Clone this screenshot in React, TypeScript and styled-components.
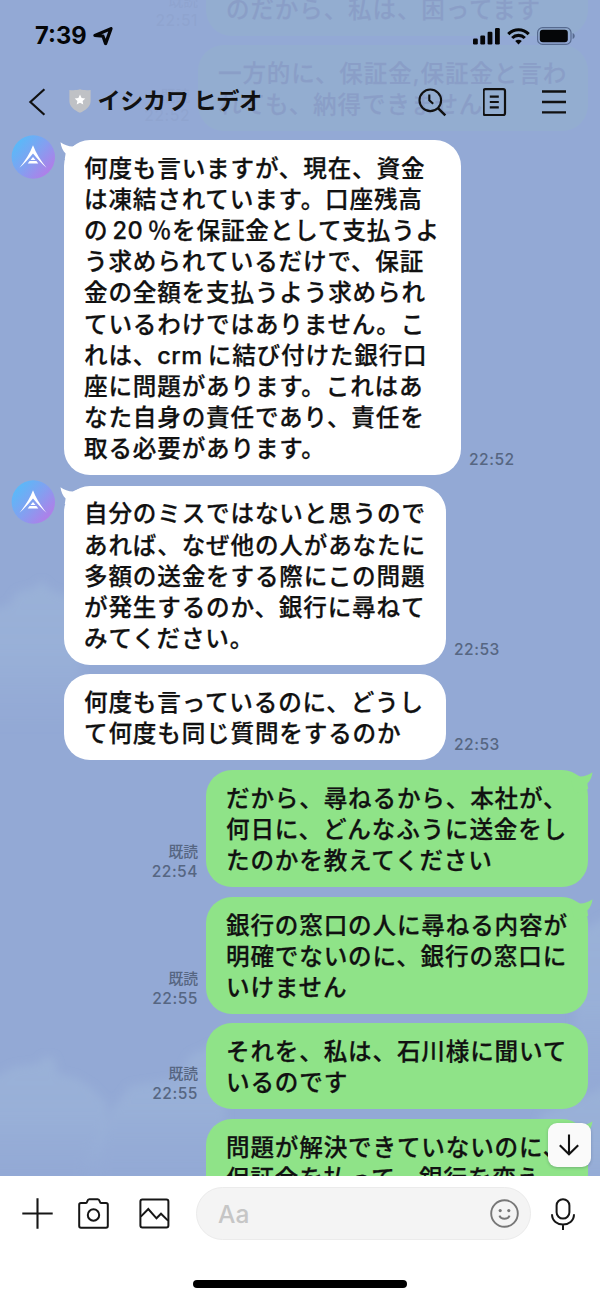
import React from 'react';
import styled, { createGlobalStyle, css } from 'styled-components';

const GlobalStyle = createGlobalStyle`
  *, *::before, *::after { box-sizing: border-box; }
  body {
    margin: 0;
    background: #fff;
    font-family: Inter, "Noto Sans CJK JP", sans-serif;
    color: #111;
  }
  svg { display: block; flex: none; }
`;

const Screen = styled.div`
  width: 600px;
  height: 1299px;
  display: flex;
  flex-direction: column;
  overflow: hidden;
  background: #fff;
`;

const Chat = styled.main`
  position: relative;
  height: 1175.5px;
  overflow: hidden;
  background: #93a9d5;
`;

const Sky = styled.svg`
  position: absolute;
  inset: 0;
`;

const Header = styled.header`
  position: absolute;
  top: 0;
  left: 0;
  z-index: 2;
  width: 600px;
  height: 134px;
  background: rgba(147, 169, 213, 0.93);
`;

const StatusBar = styled.div`
  display: flex;
  align-items: center;
  height: 72px;
  padding: 0 25px 0 35px;
`;

const Clock = styled.span`
  width: 58px;
  font-size: 23.7px;
  font-weight: 700;
  line-height: 30px;
  color: #050608;
`;

const StatusIcons = styled.div`
  display: flex;
  align-items: center;
  gap: 7px;
  margin-left: auto;
`;

const NavBar = styled.nav`
  display: flex;
  align-items: center;
  height: 60px;
  padding: 0 34px 0 28px;
`;

const ContactName = styled.h1`
  margin: -2px 0 0 7px;
  font-size: 23.2px;
  font-weight: 700;
  line-height: 32px;
  letter-spacing: -0.45px;
  white-space: nowrap;
`;

const NavActions = styled.div`
  display: flex;
  align-items: center;
  gap: 35.5px;
  margin-left: auto;
`;

const Thread = styled.div`
  position: relative;
  display: flex;
  flex-direction: column;
  margin-top: -50.4px;
`;

const Row = styled.article<{ $mine?: boolean; $gap: number }>`
  display: flex;
  flex-direction: ${(p) => (p.$mine ? 'row-reverse' : 'row')};
  align-items: flex-end;
  gap: 8px;
  margin-top: ${(p) => p.$gap}px;
  padding: ${(p) => (p.$mine ? '0 12px 0 0' : '0 0 0 11px')};
`;

const AvatarSlot = styled.div`
  align-self: flex-start;
  width: 45px;
  margin-top: -5.5px;
`;

const Bubble = styled.div<{ $mine?: boolean; $width: number }>`
  position: relative;
  width: ${(p) => p.$width}px;
  padding: 12.8px 0 11.2px 20px;
  border-radius: 26px;
  background: ${(p) => (p.$mine ? '#8fe388' : '#fff')};
`;

const Tail = styled.svg<{ $mine?: boolean }>`
  position: absolute;
  top: 1.8px;
  ${(p) =>
    p.$mine
      ? css`
          right: -4.5px;
        `
      : css`
          left: -4.5px;
          transform: scaleX(-1);
        `}
`;

const Line = styled.p`
  margin: 0;
  height: 31.1px;
  font-size: 23.6px;
  font-weight: 500;
  line-height: 31.1px;
  letter-spacing: 0.82px;
  white-space: nowrap;
  -webkit-text-stroke: 0.25px currentColor;
`;

const Latin = styled.span<{ $before: number; $after: number }>`
  margin: 0 ${(p) => p.$after}px 0 ${(p) => p.$before}px;
  letter-spacing: 0.5px;
`;

const Meta = styled.div<{ $mine?: boolean }>`
  display: flex;
  flex-direction: column;
  align-items: ${(p) => (p.$mine ? 'flex-end' : 'flex-start')};
  padding-bottom: 6.2px;
  font-size: 15.6px;
  font-weight: 500;
  line-height: 19px;
  letter-spacing: 0.5px;
  color: #566682;
`;

const ReadMark = styled.span`
  font-size: 14.8px;
  letter-spacing: 0;
`;

const JumpButton = styled.button`
  position: absolute;
  z-index: 3;
  right: 9px;
  bottom: 9px;
  display: flex;
  align-items: center;
  justify-content: center;
  width: 43.5px;
  height: 43.5px;
  padding: 0;
  border: 0;
  border-radius: 9px;
  background: #fafafa;
  box-shadow: 0 1px 3px rgba(20, 40, 60, 0.25);
`;

const Composer = styled.footer`
  display: flex;
  align-items: center;
  height: 76px;
  padding: 0 25px 0 22px;
`;

const Field = styled.div`
  display: flex;
  align-items: center;
  justify-content: space-between;
  width: 335px;
  height: 52.5px;
  margin: 0 20px 0 25.6px;
  padding: 0 11px 0 21.5px;
  border: 1px solid #ebebeb;
  border-radius: 27px;
  background: #f4f4f4;
`;

const Placeholder = styled.span`
  margin-top: 1px;
  font-size: 24.5px;
  font-weight: 500;
  line-height: 30px;
  color: #c6c6c6;
`;

const HomeIndicator = styled.div`
  width: 214px;
  height: 7.5px;
  margin: 28.5px auto 0;
  border-radius: 4px;
  background: #000;
`;

const Clouds = () => (
  <Sky width="600" height="1176" viewBox="0 0 600 1176" aria-hidden="true">
    <defs>
      <filter id="soft" x="-20%" y="-20%" width="140%" height="140%">
        <feGaussianBlur stdDeviation="4.5" />
      </filter>
      <linearGradient id="mist" x1="0" y1="0" x2="0" y2="1">
        <stop offset="0" stopColor="#a0b9da" stopOpacity="0.5" />
        <stop offset="0.5" stopColor="#9fb8db" stopOpacity="0.45" />
        <stop offset="1" stopColor="#9ab2d9" stopOpacity="0" />
      </linearGradient>
    </defs>
    <g fill="url(#mist)" filter="url(#soft)">
      <path d="M-10 610 L8 606 L18 592 L34 588 L42 581 L50 590 L80 600 V730 H-10Z" />
      <path d="M-10 1080 L14 1067 L38 1064 L44 1057 L54 1058 L58 1074 L76 1078 L92 1088 L108 1104 L100 1178 H-10Z" />
      <path d="M84 1160 L112 1110 L130 1086 L178 1079 L190 1056 L225 1040 V1180 H84Z" />
      <path d="M575 935 L610 915 V1100 H575Z" />
      <path d="M540 1115 L610 1085 V1210 H540Z" />
    </g>
  </Sky>
);

const Avatar = () => (
  <svg width="44" height="44" viewBox="0 0 44 44">
    <defs>
      <linearGradient id="orb" x1="0.12" y1="0.2" x2="0.88" y2="0.85">
        <stop offset="0" stopColor="#5cb8f8" />
        <stop offset="0.5" stopColor="#849ff0" />
        <stop offset="1" stopColor="#b17de8" />
      </linearGradient>
    </defs>
    <circle cx="22.3" cy="22" r="21.7" fill="url(#orb)" />
    <path
      d="M22 10.3 C25 18.5 30 26 35.5 32.8 C31 29 26.5 24 22 18.6 C17.5 24 13 29 8.5 32.8 C14 26 19 18.5 22 10.3Z"
      fill="#fff"
    />
    <path d="M22 22 L24.5 25 H19.5Z M18.6 25.9 H25.4 L27.3 28.4 H16.7Z" fill="#fff" />
  </svg>
);

const BubbleTail = ({ mine }: { mine?: boolean }) => (
  <Tail $mine={mine} width="30" height="22" viewBox="0 0 30 22">
    <path
      d="M6 1.5 C10 1.5 13.5 2.6 17.3 4.6 C21.5 4.2 26 2.9 29.5 0.2 C29 4.5 27.2 8.6 24.4 11.6 L25.2 17 L12 22Z"
      fill={mine ? '#8fe388' : '#fff'}
    />
  </Tail>
);

type Message = {
  lines: React.ReactNode[];
  time: string;
  width: number;
  gap: number;
  mine?: boolean;
  avatar?: boolean;
  tail?: boolean;
};

const messages: Message[] = [
  { mine: true, tail: true, width: 382, gap: 0, time: '22:51', lines: ['', 'のだから、私は、困ってます'] },
  { mine: true, width: 390, gap: 9, time: '22:52', lines: ['一方的に、保証金,保証金と言わ', 'れても、納得できません'] },
  {
    avatar: true,
    tail: true,
    width: 397,
    gap: 9.3,
    time: '22:52',
    lines: [
      '何度も言いますが、現在、資金',
      'は凍結されています。口座残高',
      <>
        の
        <Latin $before={4} $after={4.5}>
          20
        </Latin>
        ％を保証金として支払うよ
      </>,
      'う求められているだけで、保証',
      '金の全額を支払うよう求められ',
      'ているわけではありません。こ',
      <>
        れは、
        <Latin $before={0} $after={5}>
          crm
        </Latin>
        に結び付けた銀行口
      </>,
      '座に問題があります。これはあ',
      'なた自身の責任であり、責任を',
      '取る必要があります。',
    ],
  },
  {
    avatar: true,
    tail: true,
    width: 382,
    gap: 10.5,
    time: '22:53',
    lines: [
      '自分のミスではないと思うので',
      'あれば、なぜ他の人があなたに',
      '多額の送金をする際にこの問題',
      'が発生するのか、銀行に尋ねて',
      'みてください。',
    ],
  },
  { width: 382, gap: 8.8, time: '22:53', lines: ['何度も言っているのに、どうし', 'て何度も同じ質問をするのか'] },
  {
    mine: true,
    tail: true,
    width: 382,
    gap: 9.8,
    time: '22:54',
    lines: ['だから、尋ねるから、本社が、', '何日に、どんなふうに送金をし', 'たのかを教えてください'],
  },
  {
    mine: true,
    tail: true,
    width: 382,
    gap: 10,
    time: '22:55',
    lines: ['銀行の窓口の人に尋ねる内容が', '明確でないのに、銀行の窓口に', 'いけません'],
  },
  { mine: true, width: 382, gap: 8.6, time: '22:55', lines: ['それを、私は、石川様に聞いて', 'いるのです'] },
  {
    mine: true,
    tail: true,
    width: 382,
    gap: 9.8,
    time: '22:56',
    lines: ['問題が解決できていないのに、', '保証金を払って、銀行を変え', 'ても'],
  },
];

const MessageRow = ({ m }: { m: Message }) => (
  <Row $mine={m.mine} $gap={m.gap}>
    {!m.mine && <AvatarSlot>{m.avatar && <Avatar />}</AvatarSlot>}
    <Bubble $mine={m.mine} $width={m.width}>
      {m.tail && <BubbleTail mine={m.mine} />}
      {m.lines.map((line, i) => (
        <Line key={i}>{line}</Line>
      ))}
    </Bubble>
    <Meta $mine={m.mine}>
      {m.mine && <ReadMark>既読</ReadMark>}
      <span>{m.time}</span>
    </Meta>
  </Row>
);

const LocationIcon = () => (
  <svg width="20" height="19" viewBox="0 0 20 19">
    <path d="M1.9 8.5 L18 1.6 L12.6 16.6 L10 9.2Z" fill="none" stroke="#050608" strokeWidth="3.2" strokeLinejoin="round" />
  </svg>
);

const SignalIcon = () => (
  <svg width="27" height="17" viewBox="0 0 27 17" fill="#050608">
    <rect x="0" y="10.5" width="4.8" height="6" rx="1.2" />
    <rect x="7.3" y="7.5" width="4.8" height="9" rx="1.2" />
    <rect x="14.6" y="3.8" width="4.8" height="12.7" rx="1.2" />
    <rect x="22" y="0" width="4.8" height="16.5" rx="1.2" />
  </svg>
);

const WifiIcon = () => (
  <svg width="23" height="17" viewBox="0 0 23 17">
    <g fill="none" stroke="#050608" strokeWidth="3.1">
      <path d="M1.3 6.1 C7 0.2 16 0.2 21.7 6.1" />
      <path d="M5.2 10 C8.7 6.5 14.3 6.5 17.8 10" />
    </g>
    <path d="M8.2 13 C10 11.4 13 11.4 14.8 13 L11.5 16.4Z" fill="#050608" />
  </svg>
);

const BatteryIcon = () => (
  <svg width="38" height="18" viewBox="0 0 38 18">
    <rect x="0.6" y="0.6" width="33.4" height="16.8" rx="5" fill="none" stroke="#566a8f" strokeWidth="1.2" />
    <rect x="2.8" y="2.8" width="28" height="12.4" rx="3" fill="#050608" />
    <path d="M35.6 6 C38.4 7 38.4 11 35.6 12Z" fill="#566a8f" />
  </svg>
);

const BackIcon = () => (
  <svg width="18" height="28" viewBox="0 0 18 28">
    <path d="M16.4 1.2 L2.4 14 L16.4 26.8" fill="none" stroke="#111" strokeWidth="2.2" />
  </svg>
);

const ShieldIcon = styled.svg`
  margin: -2px 0 0 22.5px;
`;

const SearchIcon = () => (
  <svg width="29" height="29" viewBox="0 0 29 29" fill="none" stroke="#111" strokeWidth="2.1">
    <circle cx="12.3" cy="12.3" r="10.8" />
    <path d="M20 20.2 L27.3 27.3" strokeWidth="2.5" />
    <path d="M11.3 6.5 V12.2 L15.2 15.8" />
  </svg>
);

const NoteIcon = () => (
  <svg width="24" height="28" viewBox="0 0 24 28" fill="none" stroke="#111" strokeWidth="2.2">
    <rect x="0.6" y="1.1" width="21.4" height="26" rx="1.8" />
    <path d="M6.8 8.7 H15.8 M6.8 14 H15.8 M6.8 19.3 H15.8" />
  </svg>
);

const MenuIcon = () => (
  <svg width="24" height="24" viewBox="0 0 24 24" stroke="#111" strokeWidth="2.3">
    <path d="M0 1.5 H24 M0 12 H24 M0 22.4 H24" />
  </svg>
);

const PlusIcon = () => (
  <svg width="31" height="31" viewBox="0 0 31 31" stroke="#161616" strokeWidth="2.1">
    <path d="M0.3 15.5 H30.7 M15.5 0.3 V30.7" />
  </svg>
);

const CameraIcon = styled.svg`
  margin-left: 25px;
`;

const PhotoIcon = styled.svg`
  margin-left: 30px;
`;

const SmileIcon = () => (
  <svg width="29" height="29" viewBox="0 0 29 29" fill="none" stroke="#777" strokeWidth="1.9">
    <circle cx="14.5" cy="14.5" r="13.3" />
    <path d="M9.4 16.6 C11 20.8 18 20.8 19.6 16.6" />
    <g fill="#777" stroke="none">
      <circle cx="10.2" cy="11.6" r="1.6" />
      <circle cx="18.8" cy="11.6" r="1.6" />
    </g>
  </svg>
);

const MicIcon = () => (
  <svg width="24" height="32" viewBox="0 0 24 32" fill="none" stroke="#161616" strokeWidth="2">
    <rect x="5.6" y="1.2" width="12.8" height="19.4" rx="6.4" />
    <path d="M1 16.2 C1 30 23 30 23 16.2 M12 26.5 V32" />
  </svg>
);

export default function App() {
  return (
    <>
      <GlobalStyle />
      <Screen>
        <Chat>
          <Clouds />
          <Header>
            <StatusBar>
              <Clock>7:39</Clock>
              <LocationIcon />
              <StatusIcons>
                <SignalIcon />
                <WifiIcon />
                <BatteryIcon />
              </StatusIcons>
            </StatusBar>
            <NavBar>
              <BackIcon />
              <ShieldIcon width="22" height="24" viewBox="0 0 22 24">
                <path d="M11 0.3 C14 1.3 18 1.3 21.6 1 V12 C21.6 18 16 21.5 11 23.8 C6 21.5 0.4 18 0.4 12 V1 C4 1.3 8 1.3 11 0.3Z" fill="#bfc1c5" />
                <path d="M11 5.6 L12.6 9 L16.3 9.4 L13.6 11.9 L14.3 15.6 L11 13.8 L7.7 15.6 L8.4 11.9 L5.7 9.4 L9.4 9Z" fill="#fff" />
              </ShieldIcon>
              <ContactName>イシカワ ヒデオ</ContactName>
              <NavActions>
                <SearchIcon />
                <NoteIcon />
                <MenuIcon />
              </NavActions>
            </NavBar>
          </Header>
          <Thread>
            {messages.map((m, i) => (
              <MessageRow key={i} m={m} />
            ))}
          </Thread>
          <JumpButton aria-label="最新のメッセージへ">
            <svg width="22" height="24" viewBox="0 0 22 24" fill="none" stroke="#111" strokeWidth="2.1">
              <path d="M11 1.5 V21 M1.8 12.2 L11 21.2 L20.2 12.2" />
            </svg>
          </JumpButton>
        </Chat>
        <Composer>
          <PlusIcon />
          <CameraIcon width="31" height="31" viewBox="0 0 31 31" fill="none" stroke="#161616" strokeWidth="2">
            <path d="M3 5 H8 C9.7 5 8.8 1.2 11.3 1.2 H19.7 C22.2 1.2 21.3 5 23 5 H28 Q29.8 5 29.8 6.8 V28 Q29.8 29.8 28 29.8 H3 Q1.2 29.8 1.2 28 V6.8 Q1.2 5 3 5Z" />
            <circle cx="15.5" cy="17" r="5.7" />
          </CameraIcon>
          <PhotoIcon width="31" height="31" viewBox="0 0 31 31" fill="none" stroke="#161616" strokeWidth="2">
            <rect x="1.4" y="1.4" width="28" height="28" rx="2" />
            <path d="M1.8 18.6 L9.3 11 L17.5 20.3 L22 15.7 L29 22.6" />
          </PhotoIcon>
          <Field>
            <Placeholder>Aa</Placeholder>
            <SmileIcon />
          </Field>
          <MicIcon />
        </Composer>
        <HomeIndicator />
      </Screen>
    </>
  );
}
